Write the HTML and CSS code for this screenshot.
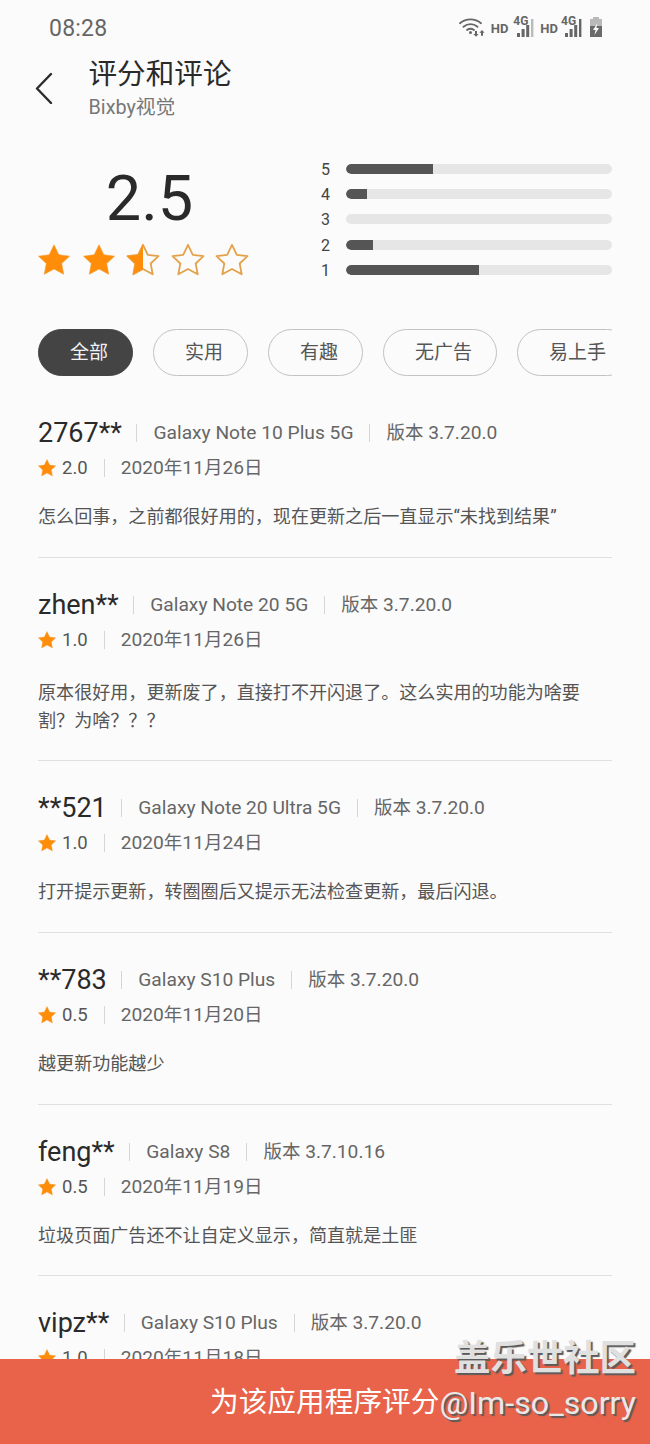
FILE: index.html
```html
<!DOCTYPE html>
<html lang="zh-CN">
<head>
<meta charset="utf-8">
<title>评分和评论</title>
<link rel="stylesheet" href="styles.css">
</head>
<body>
<svg class="defs" width="0" height="0" aria-hidden="true">
  <defs>
    <path id="star-shape" d="M16 .8l4.8 10 10.7 1.4-7.8 7.3 2 10.8L16 25l-9.7 5.3 2-10.8L.5 12.2l10.7-1.4z"/>
    <clipPath id="left-half"><rect x="0" y="0" width="16" height="32"/></clipPath>
  </defs>
</svg>
<div class="screen">
  <div class="status">
    <span class="time">08:28</span>
    <div class="status-icons">
      <svg class="wifi" width="26" height="20" viewBox="0 0 26 20"><g fill="none" stroke="#666" stroke-width="1.8" stroke-linecap="round"><path d="M1 6.2C7 1 16 1 22 6.2"/><path d="M4.5 9.8C8.7 6.3 14.3 6.3 18.5 9.8"/><path d="M8 13c2.2-1.6 4.8-1.6 7 0"/></g><circle cx="11.5" cy="15.6" r="1.5" fill="#666"/><path d="M16 14h2v3h1.6L17 19.8 14.4 17H16zM22 18.8h2v-3h1.6L23 13l-2.6 2.8H22z" fill="#666"/></svg>
      <span class="hd">HD</span>
      <span class="sig"><span class="four-g">4G</span><svg width="17" height="18" viewBox="0 0 17 18"><path d="M0 14h3v4H0zM4.6 10h3v8h-3zM9.2 6h3v12h-3z" fill="#666"/><path d="M14 0h2.4v18H14z" fill="#bbb"/></svg></span>
      <span class="hd hd-two">HD</span>
      <span class="sig"><span class="four-g">4G</span><svg width="17" height="18" viewBox="0 0 17 18"><path d="M0 14h3v4H0zM4.6 10h3v8h-3zM9.2 6h3v12h-3zM14 0h2.4v18H14z" fill="#666"/></svg></span>
      <svg class="battery" width="14" height="20" viewBox="0 0 14 20"><path d="M4 0h6v2h3v18H1V2h3z" fill="#b9b9b9"/><path d="M1 9h12v11H1z" fill="#6a6a6a"/><path d="M8.5 6L4 13h2.6L5.4 18 10 11H7.4z" fill="#fbfbfb"/></svg>
    </div>
  </div>

  <header class="appbar">
    <svg class="back" width="18" height="32" viewBox="0 0 18 32"><path d="M16 2L2 16.5 16 31" fill="none" stroke="#2b2b2b" stroke-width="2.4" stroke-linecap="round" stroke-linejoin="round"/></svg>
    <div class="titles">
      <h1 class="title">评分和评论</h1>
      <p class="subtitle">Bixby视觉</p>
    </div>
  </header>

  <section class="summary">
    <div class="score">
      <div class="score-num">2.5</div>
      <div class="stars">
        <svg class="st" viewBox="0 0 32 32"><use href="#star-shape" class="fill"/></svg>
        <svg class="st" viewBox="0 0 32 32"><use href="#star-shape" class="fill"/></svg>
        <svg class="st" viewBox="0 0 32 32"><use href="#star-shape" class="line"/><g clip-path="url(#left-half)"><use href="#star-shape" class="fill"/></g></svg>
        <svg class="st" viewBox="0 0 32 32"><use href="#star-shape" class="line"/></svg>
        <svg class="st" viewBox="0 0 32 32"><use href="#star-shape" class="line"/></svg>
      </div>
    </div>
    <div class="bars">
      <div class="bar-row"><span class="bar-label">5</span><div class="track"><div class="fill-bar" style="width:87px"></div></div></div>
      <div class="bar-row"><span class="bar-label">4</span><div class="track"><div class="fill-bar" style="width:21px"></div></div></div>
      <div class="bar-row"><span class="bar-label">3</span><div class="track"></div></div>
      <div class="bar-row"><span class="bar-label">2</span><div class="track"><div class="fill-bar" style="width:27px"></div></div></div>
      <div class="bar-row"><span class="bar-label">1</span><div class="track"><div class="fill-bar" style="width:133px"></div></div></div>
    </div>
  </section>

  <nav class="chips">
    <span class="chip chip-on">全部</span>
    <span class="chip">实用</span>
    <span class="chip">有趣</span>
    <span class="chip">无广告</span>
    <span class="chip">易上手</span>
  </nav>

  <main class="reviews">
    <article class="review">
      <div class="r-head"><span class="name">2767**</span><i class="sep"></i><span class="info">Galaxy Note 10 Plus 5G</span><i class="sep"></i><span class="info"><span class="cjk">版本</span> 3.7.20.0</span></div>
      <div class="r-meta"><svg class="mini" viewBox="0 0 32 32"><use href="#star-shape" class="fill"/></svg><span class="rate">2.0</span><i class="sep"></i><span class="info">2020<span class="cjk">年</span>11<span class="cjk">月</span>26<span class="cjk">日</span></span></div>
      <p class="comment">怎么回事，之前都很好用的，现在更新之后一直显示“未找到结果”</p>
    </article>
    <article class="review">
      <div class="r-head"><span class="name">zhen**</span><i class="sep"></i><span class="info">Galaxy Note 20 5G</span><i class="sep"></i><span class="info"><span class="cjk">版本</span> 3.7.20.0</span></div>
      <div class="r-meta"><svg class="mini" viewBox="0 0 32 32"><use href="#star-shape" class="fill"/></svg><span class="rate">1.0</span><i class="sep"></i><span class="info">2020<span class="cjk">年</span>11<span class="cjk">月</span>26<span class="cjk">日</span></span></div>
      <p class="comment comment-multi">原本很好用，更新废了，直接打不开闪退了。这么实用的功能为啥要割？为啥？？？</p>
    </article>
    <article class="review">
      <div class="r-head"><span class="name">**521</span><i class="sep"></i><span class="info">Galaxy Note 20 Ultra 5G</span><i class="sep"></i><span class="info"><span class="cjk">版本</span> 3.7.20.0</span></div>
      <div class="r-meta"><svg class="mini" viewBox="0 0 32 32"><use href="#star-shape" class="fill"/></svg><span class="rate">1.0</span><i class="sep"></i><span class="info">2020<span class="cjk">年</span>11<span class="cjk">月</span>24<span class="cjk">日</span></span></div>
      <p class="comment">打开提示更新，转圈圈后又提示无法检查更新，最后闪退。</p>
    </article>
    <article class="review">
      <div class="r-head"><span class="name">**783</span><i class="sep"></i><span class="info">Galaxy S10 Plus</span><i class="sep"></i><span class="info"><span class="cjk">版本</span> 3.7.20.0</span></div>
      <div class="r-meta"><svg class="mini" viewBox="0 0 32 32"><use href="#star-shape" class="fill"/></svg><span class="rate">0.5</span><i class="sep"></i><span class="info">2020<span class="cjk">年</span>11<span class="cjk">月</span>20<span class="cjk">日</span></span></div>
      <p class="comment">越更新功能越少</p>
    </article>
    <article class="review">
      <div class="r-head"><span class="name">feng**</span><i class="sep"></i><span class="info">Galaxy S8</span><i class="sep"></i><span class="info"><span class="cjk">版本</span> 3.7.10.16</span></div>
      <div class="r-meta"><svg class="mini" viewBox="0 0 32 32"><use href="#star-shape" class="fill"/></svg><span class="rate">0.5</span><i class="sep"></i><span class="info">2020<span class="cjk">年</span>11<span class="cjk">月</span>19<span class="cjk">日</span></span></div>
      <p class="comment">垃圾页面广告还不让自定义显示，简直就是土匪</p>
    </article>
    <article class="review">
      <div class="r-head"><span class="name">vipz**</span><i class="sep"></i><span class="info">Galaxy S10 Plus</span><i class="sep"></i><span class="info"><span class="cjk">版本</span> 3.7.20.0</span></div>
      <div class="r-meta"><svg class="mini" viewBox="0 0 32 32"><use href="#star-shape" class="fill"/></svg><span class="rate">1.0</span><i class="sep"></i><span class="info">2020<span class="cjk">年</span>11<span class="cjk">月</span>18<span class="cjk">日</span></span></div>
    </article>
  </main>

  <div class="rate-bar"><span class="rate-text">为该应用程序评分</span></div>
  <div class="watermark">
    <span class="wm-title">盖乐世社区</span>
    <span class="wm-user">@Im-so_sorry</span>
  </div>
</div>
</body>
</html>
```

FILE: styles.css
```css
* { box-sizing: border-box; }
html, body { margin: 0; padding: 0; }
body {
  width: 650px;
  height: 1444px;
  overflow: hidden;
  background: #fbfbfb;
  font-family: Roboto, "Noto Sans CJK SC", sans-serif;
}
.defs { position: absolute; }
.screen { position: relative; width: 650px; height: 1444px; overflow: hidden; }

.status {
  display: flex;
  justify-content: space-between;
  align-items: center;
  height: 56px;
  padding: 0 47px 0 49px;
}
.time { font-size: 23px; color: #666; letter-spacing: 0.2px; margin-top: 1px; }
.status-icons { display: flex; align-items: center; height: 24px; margin-top: -2px; }
.wifi { margin-right: 6px; }
.hd { font-size: 13px; font-weight: 700; color: #666; margin-right: 5px; margin-top: 3px; }
.hd-two { margin-left: 6px; margin-right: 3px; }
.sig { position: relative; display: block; width: 21px; height: 20px; padding: 2px 0 0 4px; }
.sig svg { display: block; }
.four-g { position: absolute; left: 0; top: -3px; font-size: 12px; font-weight: 700; color: #666; }
.battery { margin-left: 7px; }

.appbar { display: flex; align-items: center; height: 67px; padding-left: 35px; }
.back { margin-right: 35.5px; margin-top: -3px; }
.titles { margin-top: -1px; }
.title { margin: 0 0 1px; font-size: 28.6px; line-height: 36px; font-weight: 400; color: #2a2a2a; }
.subtitle { margin: 0; font-size: 19.8px; line-height: 30px; color: #777; }

.summary { display: flex; height: 206px; padding: 37px 38px 0; }
.score { width: 210px; flex: none; }
.score-num { font-size: 63px; line-height: 74px; text-align: center; color: #2a2a2a; padding-left: 13px; margin-top: 2px; }
.stars { display: flex; gap: 12.5px; margin-top: 8px; }
.st { width: 32px; height: 32px; flex: none; display: block; overflow: visible; }
.fill { fill: #ff8d0a; stroke: #f39a2b; stroke-width: 0.6; stroke-linejoin: round; }
.line { fill: #fbfbfb; stroke: #e3a24a; stroke-width: 1.8; stroke-linejoin: round; }

.bars { display: flex; flex-direction: column; gap: 5.2px; flex: 1; padding-left: 73px; margin-top: -1px; }
.bar-row { display: flex; align-items: center; height: 20px; }
.bar-label { width: 25px; flex: none; font-size: 16px; line-height: 20px; color: #444; padding-top: 2px; }
.track { flex: 1; height: 10px; border-radius: 5px; background: #e6e6e6; overflow: hidden; }
.fill-bar { height: 100%; background: #555; border-radius: 5px 0 0 5px; }

.chips { display: flex; gap: 20px; margin: 0 38px; overflow: hidden; }
.chip {
  flex: none;
  height: 47px;
  padding: 0 24px 0 31px;
  border: 1px solid #c2c2c2;
  border-radius: 24px;
  font-size: 19px;
  line-height: 45px;
  color: #555;
}
.chip-on { background: #444; border-color: #444; color: #f2f2f2; }

.reviews { margin: 10px 38px 0; }
.review { padding: 30px 0 25.67px; border-bottom: 1px solid #e0e0e0; }
.r-head { display: flex; align-items: center; height: 34px; }
.r-meta { display: flex; align-items: center; height: 28px; margin-top: 4px; }
.name { font-size: 27px; line-height: 34px; color: #2a2a2a; margin-right: -1.5px; }
.sep { flex: none; width: 1px; height: 18px; background: #d5d5d5; margin: 0 16px; }
.info { font-size: 19.2px; line-height: 28px; color: #666; }
.cjk { font-size: 18.5px; }
.mini { width: 18px; height: 18px; flex: none; margin-right: 6px; overflow: visible; }
.rate { font-size: 18.5px; line-height: 28px; color: #555; }
.comment { margin: 21px 0 0; padding-right: 20px; font-size: 18.07px; line-height: 28px; color: #555; }
.comment-multi { margin-top: 25px; }

.rate-bar {
  position: absolute;
  left: 0;
  right: 0;
  bottom: 0;
  height: 85px;
  background: #e8634a;
  padding: 25px 0 0 210px;
}
.rate-text { font-size: 28.7px; line-height: 36px; color: #fff; }
.watermark { position: absolute; right: 14px; top: 1338px; display: flex; flex-direction: column; align-items: flex-end; text-shadow: 2px 2px 1px #5a5a5a; color: #e8e8e8; }
.wm-title { font-size: 36.4px; line-height: 42px; font-weight: 700; color: #e0e0e0; }
.wm-user { font-size: 32.2px; line-height: 46px; }
```
